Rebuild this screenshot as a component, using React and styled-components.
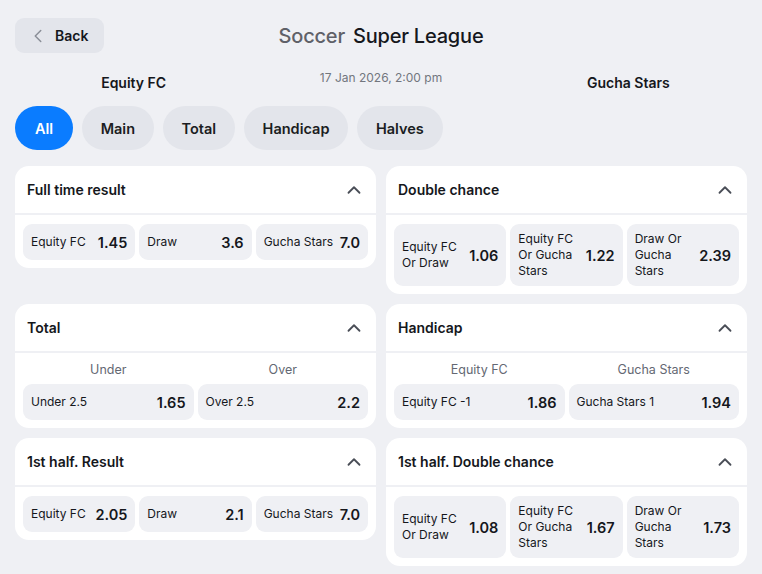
import React from 'react';
import styled, { createGlobalStyle } from 'styled-components';
import { ChevronLeft, ChevronUp } from 'lucide-react';

const GlobalStyle = createGlobalStyle`
  html, body {
    margin: 0;
    padding: 0;
    background: #eff0f4;
    font-family: Inter, "Noto Sans", sans-serif;
    color: #15171c;
  }
  * { box-sizing: border-box; }
`;

const Page = styled.div`
  padding: 18px 15px 20px;
`;

const TopBar = styled.div`
  display: grid;
  grid-template-columns: 1fr auto 1fr;
  align-items: center;
`;

const BackButton = styled.button`
  justify-self: start;
  display: flex;
  align-items: center;
  gap: 6px;
  height: 35px;
  padding: 0 16px 0 12px;
  border: 0;
  border-radius: 9px;
  background: #e3e5eb;
  font-family: inherit;
  font-size: 14px;
  font-weight: 600;
  color: #15171c;
  svg { color: #8a8e97; }
`;

const Title = styled.h1`
  margin: 0;
  font-size: 20px;
  font-weight: 500;
  letter-spacing: -0.2px;
  span { color: #5f6168; margin-right: 8px; }
`;

const Teams = styled.div`
  display: grid;
  grid-template-columns: 1fr 1fr 1fr;
  align-items: center;
  margin: 17px -5px 0;
  height: 24px;
`;

const TeamName = styled.div`
  text-align: center;
  font-size: 14px;
  font-weight: 600;
`;

const MatchDate = styled.div`
  text-align: center;
  font-size: 12px;
  color: #72767e;
  margin-bottom: 10px;
`;

const Tabs = styled.div`
  display: flex;
  gap: 8.5px;
  margin-top: 12px;
`;

const Tab = styled.button`
  height: 44px;
  padding: 0 ${p => (p.$active ? 20 : 19)}px;
  border: 0;
  border-radius: 22px;
  font-family: inherit;
  font-size: 14.5px;
  font-weight: 600;
  background: ${p => (p.$active ? '#0a7cff' : '#e3e5eb')};
  color: ${p => (p.$active ? '#fff' : '#1b1d22')};
`;

const Grid = styled.div`
  display: grid;
  grid-template-columns: 1fr 1fr;
  gap: 10px;
  align-items: start;
  margin-top: 16px;
`;

const Card = styled.section`
  background: #fff;
  border-radius: 14px;
  overflow: hidden;
`;

const CardHeader = styled.div`
  display: flex;
  align-items: center;
  justify-content: space-between;
  height: 49px;
  padding: 0 11px 0 12px;
  border-bottom: 2px solid #eff0f4;
  font-size: 14px;
  font-weight: 600;
  svg { color: #4a4e57; }
`;

const CardBody = styled.div`
  padding: 9px 8px 8px;
`;

const Columns = styled.div`
  display: grid;
  grid-template-columns: repeat(${p => p.$cols}, 1fr);
  gap: 4px;
`;

const ColumnLabel = styled.div`
  text-align: center;
  font-size: 12.5px;
  color: #646873;
  line-height: 16px;
  margin: 0 0 6px;
`;

const Odd = styled.button`
  display: flex;
  align-items: center;
  justify-content: space-between;
  gap: 6px;
  min-height: 36px;
  padding: 7px 8px;
  border: 0;
  border-radius: 9px;
  background: #eff0f4;
  font-family: inherit;
  text-align: left;
  color: #15171c;
`;

const OddLabel = styled.span`
  font-size: 12px;
  line-height: 16px;
`;

const OddValue = styled.span`
  flex-shrink: 0;
  font-size: 14.5px;
  font-weight: 600;
`;

const markets = [
  {
    title: 'Full time result',
    odds: [['Equity FC', '1.45'], ['Draw', '3.6'], ['Gucha Stars', '7.0']],
  },
  {
    title: 'Double chance',
    odds: [['Equity FC Or Draw', '1.06'], ['Equity FC Or Gucha Stars', '1.22'], ['Draw Or Gucha Stars', '2.39']],
  },
  {
    title: 'Total',
    heads: ['Under', 'Over'],
    odds: [['Under 2.5', '1.65'], ['Over 2.5', '2.2']],
  },
  {
    title: 'Handicap',
    heads: ['Equity FC', 'Gucha Stars'],
    odds: [['Equity FC -1', '1.86'], ['Gucha Stars 1', '1.94']],
  },
  {
    title: '1st half. Result',
    odds: [['Equity FC', '2.05'], ['Draw', '2.1'], ['Gucha Stars', '7.0']],
  },
  {
    title: '1st half. Double chance',
    odds: [['Equity FC Or Draw', '1.08'], ['Equity FC Or Gucha Stars', '1.67'], ['Draw Or Gucha Stars', '1.73']],
  },
];

const Market = ({ market }) => (
  <Card>
    <CardHeader>
      {market.title}
      <ChevronUp size={22} strokeWidth={2} />
    </CardHeader>
    <CardBody>
      {market.heads && (
        <Columns $cols={market.heads.length}>
          {market.heads.map(h => (
            <ColumnLabel key={h}>{h}</ColumnLabel>
          ))}
        </Columns>
      )}
      <Columns $cols={market.odds.length}>
        {market.odds.map(([label, value]) => (
          <Odd key={label}>
            <OddLabel>{label}</OddLabel>
            <OddValue>{value}</OddValue>
          </Odd>
        ))}
      </Columns>
    </CardBody>
  </Card>
);

const tabs = ['All', 'Main', 'Total', 'Handicap', 'Halves'];

export default function App() {
  return (
    <Page>
      <GlobalStyle />
      <TopBar>
        <BackButton>
          <ChevronLeft size={22} strokeWidth={1.6} />
          Back
        </BackButton>
        <Title>
          <span>Soccer</span>Super League
        </Title>
        <div />
      </TopBar>
      <Teams>
        <TeamName>Equity FC</TeamName>
        <MatchDate>17 Jan 2026, 2:00 pm</MatchDate>
        <TeamName>Gucha Stars</TeamName>
      </Teams>
      <Tabs>
        {tabs.map((t, i) => (
          <Tab key={t} $active={i === 0}>{t}</Tab>
        ))}
      </Tabs>
      <Grid>
        {markets.map(m => (
          <Market key={m.title} market={m} />
        ))}
      </Grid>
    </Page>
  );
}
